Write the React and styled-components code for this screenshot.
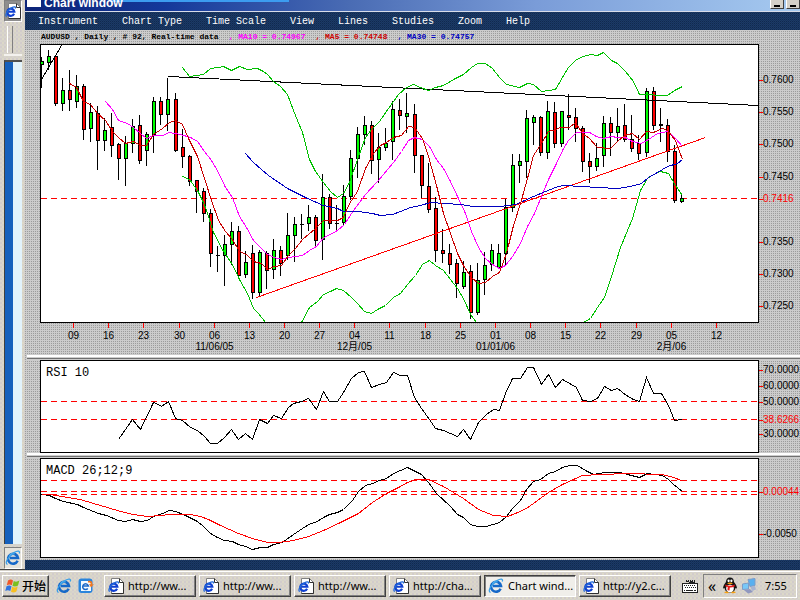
import React from "react"
import styled, { createGlobalStyle, css } from "styled-components"

const red = "#ff0000"
const mono = `"Liberation Mono", "Noto Sans CJK SC", monospace`
const face = `conic-gradient(#cccccc 25%, #cccccc 0 50%, #9c9c9c 0 75%, #cccccc 0) 0 0 / 2px 2px`
const navy = `conic-gradient(#1c3c64 25%, #102850 0 50%, #1c3c64 0 75%, #16305e 0) 0 0 / 2px 2px`
const system = `conic-gradient(#d6d2ca 25%, #dcd8c8 0 50%, #d2cccc 0 75%, #d8d4cc 0) 0 0 / 4px 4px`

const GlobalStyle = createGlobalStyle`
  * { box-sizing: border-box; }
  body { margin: 0; background: #d4d0c8; }
  button { border: 0; margin: 0; padding: 0; background: none; color: inherit; font: inherit; }
`

const Desktop = styled.div`
  display: flex;
  flex-direction: column;
  min-height: 100vh;
  overflow: hidden;
  font-family: "Noto Sans", "Noto Sans CJK SC", sans-serif;
  font-size: 11px;
`

const Workspace = styled.div`
  display: flex;
  flex: 1;
`

/* ---- side strip ---- */

const Strip = styled.aside`
  display: flex;
  flex-direction: column;
  width: 25px;
  padding: 0 3px 0 4px;
  background: ${system};
  border-bottom: 1px solid #404040;
`

const StripIcon = styled.div`
  display: flex;
  justify-content: center;
  align-items: center;
  height: 22px;
  background: ${p => (p.$dark ? "#8e8e8e" : "#e6e3dc")};
  border: 1px solid #808080;
  border-right-color: #fff;
  border-bottom-color: #fff;
`

const Grip = styled.div`
  height: 34px;
  padding: 4px 3px 3px;
  border-bottom: 2px solid #f4f2ee;
  margin-bottom: 4px;

  &::before {
    content: "";
    display: block;
    width: 4px;
    height: 27px;
    border-left: 1px solid #fff;
    border-right: 1px solid #808080;
  }
`

const Gutter = styled.div`
  flex: 1;
  border-top: 2px solid #505050;
  border-left: 1px solid #404040;
  background: linear-gradient(90deg, #1660bc 8px, #e2f3fc 8px);
  margin-bottom: 3px;
`

/* ---- chart window ---- */

const Window = styled.main`
  display: flex;
  flex-direction: column;
  flex: 1;
  min-width: 0;
  background: ${face};
`

const TitleBar = styled.header`
  display: flex;
  align-items: flex-end;
  height: 12px;
  padding-left: 2px;
  overflow: hidden;
  color: #fff;
  border-bottom: 1px solid #d8dce8;
  background:
    linear-gradient(#3c9cf0, #3c9cf0) 85px 0 / 179px 2px no-repeat,
    linear-gradient(90deg, #0c2478 0%, #14389a 18%, #4a6cb4 42%, #7a9cd8 66%, #a6caf0 100%);
`

const TitleIcon = styled.span`
  width: 14px;
  height: 7px;
  margin-bottom: 4px;
  background: #fff;
`

const Title = styled.h1`
  flex: 1;
  margin: 0 0 1px 3px;
  font: bold 12px/14px "Liberation Sans", sans-serif;
`

const WindowButton = styled.button`
  width: 14px;
  height: 9px;
  margin: 0 0 2px 2px;
  background: #d4d0c8;
  border: 1px solid #404040;
  border-top: 0;
  border-left-color: #fff;
  flex: none;

  &::before {
    content: "";
    display: block;
    width: 6px;
    height: 2px;
    margin: 3px 0 0 3px;
    background: #000;
  }
`

const MenuBar = styled.nav`
  display: flex;
  align-items: center;
  gap: 24px;
  height: 18px;
  padding-left: 13px;
  color: #fff;
  background: ${navy};
  font-family: ${mono};
  font-size: 10px;
  white-space: nowrap;
`

const Legend = styled.p`
  display: flex;
  align-items: center;
  gap: 10px;
  height: 14px;
  margin: 0;
  padding-left: 16px;
  font: bold 8px/14px ${mono};
  white-space: pre;
`

const LegendItem = styled.span`
  color: ${p => p.$color};
`

const Panel = styled.section`
  display: grid;
  grid-template-columns: minmax(0, 1fr) 41px;
  padding-left: 15px;
`

const Plot = styled.div`
  position: relative;
  border: 1px solid #000;
  background: #fff;

  svg {
    display: block;
    width: 100%;
    height: ${p => p.$height}px;
  }
`

const PlotLabel = styled.h2`
  position: absolute;
  top: 4px;
  left: 5px;
  margin: 0;
  font: 12px/16px ${mono};
`

const Axis = styled.svg`
  display: block;
  width: 100%;
  height: ${p => p.$height}px;
  font-family: "Liberation Sans", "Noto Sans CJK SC", sans-serif;
  font-size: 10px;
  overflow: hidden;
`

const Splitter = styled.hr`
  height: 5px;
  margin: 0 0 0 2px;
  border: 0;
  background: linear-gradient(#fff 2px, #ccc 2px 3px, #707070 3px 4px, #ccc 4px);
`

const Footer = styled.div`
  flex: 1;
  min-height: 10px;
  margin-top: 2px;
  background: ${navy};
`

/* ---- task bar ---- */

const TaskBar = styled.footer`
  display: flex;
  align-items: center;
  height: 30px;
  padding: 0 3px 0 2px;
  border-top: 1px solid #d4d0c8;
  box-shadow: inset 0 1px #fff;
  background: ${system};
`

const raised = css`
  border: 1px solid #fff;
  border-right-color: #404040;
  border-bottom-color: #404040;
  box-shadow: inset -1px -1px #808080;
`

const sunken = css`
  border: 1px solid #404040;
  border-right-color: #fff;
  border-bottom-color: #fff;
  box-shadow: inset 1px 1px #808080;
`

const StartButton = styled.button`
  ${raised}
  display: flex;
  align-items: center;
  gap: 1px;
  width: 47px;
  height: 22px;
  padding-left: 2px;
  font: 500 12px/20px "Noto Sans CJK SC", sans-serif;
  white-space: nowrap;
  flex: none;
`

const QuickLaunch = styled.div`
  display: flex;
  gap: 6px;
  width: 55px;
  padding-left: 7px;
  flex: none;
`

const Tasks = styled.div`
  display: flex;
  flex: 1;
  gap: 3px;
  min-width: 0;
`

const Task = styled.button`
  ${p => (p.$active ? sunken : raised)}
  display: flex;
  align-items: center;
  gap: 4px;
  flex: 0 0 92px;
  height: 22px;
  padding-left: 3px;
  background: ${p => (p.$active ? "#f0eeea" : "transparent")};
  white-space: nowrap;
`

const Tray = styled.div`
  display: flex;
  align-items: center;
  gap: 3px;
  height: 24px;
  width: 94px;
  margin-left: 4px;
  padding-left: 4px;
  border: 1px solid #808080;
  border-right-color: #fff;
  border-bottom-color: #fff;
  flex: none;
`

const Expand = styled.button`
  width: 11px;
  font-size: 16px;
  line-height: 16px;
  text-align: left;
`

const Clock = styled.time`
  margin-left: 5px;
`

/* ---- icons ---- */

const IeIcon = () => (
  <svg width="16" height="16" viewBox="0 0 16 16" fill="none" aria-hidden="true">
    <path d="M12.6 10.8A5 5 0 1 1 13 8H5" stroke="#1668c8" strokeWidth="2.6" />
    <path d="M4.5 6.4a4 4 0 0 1 5-2.4" stroke="#6cc8f8" strokeWidth="1.2" />
    <path d="M2.6 14.4C-1 13.6 3.2 6 9 2.6c4-2.4 6.4-1.6 5.2 1" stroke="#3aa0e8" strokeWidth="1.3" />
  </svg>
)

const PageIcon = () => (
  <svg width="16" height="16" viewBox="0 0 16 16" aria-hidden="true">
    <path d="M3.5.5h8l4 4v11h-12z" fill="#fff" stroke="#808080" />
    <path d="M11.5.5v4h4M15.5 4.5v11h-12" fill="none" stroke="#303030" />
    <g transform="translate(0 3) scale(.72)">
      <path d="M12.6 10.8A5 5 0 1 1 13 8H5" fill="none" stroke="#1040d0" strokeWidth="3" />
      <path d="M2.6 14.4C-1 13.6 3.2 6 9 2.6c4-2.4 6.4-1.6 5.2 1" fill="none" stroke="#2068d8" strokeWidth="1.8" />
    </g>
  </svg>
)

const FlagIcon = () => (
  <svg width="16" height="16" viewBox="0 0 16 16" aria-hidden="true">
    <path d="M3 2.4c2-1.2 3.6-1 5 0L6.8 7.2c-1.4-1-3-1.1-5 0z" fill="#f0582a" />
    <path d="M8.8 3c1.8 1 3.6.9 5.6-.4L13 7.6c-2 1.1-3.7 1.2-5.5.2z" fill="#7ac020" />
    <path d="M1.5 8.2c2-1.1 3.6-1 5 0L5.3 13c-1.5-1-3-1.1-5 0z" fill="#2f74e0" />
    <path d="M7.2 8.7c1.8 1 3.6.9 5.5-.2l-1.3 5c-2 1.2-3.7 1.2-5.4.2z" fill="#f8c020" />
  </svg>
)

const MailIcon = () => (
  <svg width="17" height="16" viewBox="0 0 17 16" aria-hidden="true">
    <rect x=".5" y=".5" width="14" height="14.5" rx="3" fill="#2a84dc" />
    <path d="M3 3h8l2 2v8H3z" fill="#f4faff" />
    <path d="M9.8 10.6A2.9 2.9 0 1 1 10.4 8H5.5" fill="none" stroke="#1c68c8" strokeWidth="1.5" />
    <path d="M10 3c3-1 5 .8 4.2 3.5l1.8-.5-3 3.500-2-3.400 1.600.2c.3-1.300-.6-2-2.600-1.800z" fill="#f07820" />
  </svg>
)

const KeyboardIcon = () => (
  <svg width="17" height="14" viewBox="0 0 17 14" shapeRendering="crispEdges" aria-hidden="true">
    <path d="M4.500 1v1.500h2V1M8.500 1v1.500h2V1M12.500 1v2.500h-5V5" fill="none" stroke="#202020" />
    <rect x=".5" y="4.500" width="15" height="9" fill="#fff" stroke="#202020" />
    <path d="M2 6.500h12M3 8.500h11" stroke="#202020" strokeDasharray="1 1" />
    <path d="M2 11.500h1M4 11.500h7M12 11.500h2" stroke="#202020" />
  </svg>
)

const PenguinIcon = () => (
  <svg width="16" height="17" viewBox="0 0 16 17" aria-hidden="true">
    <path d="M8 .5c2.6 0 4 1.800 4 4.500 1.500 1.800 3 4.200 3 6.500l-1.500-.6C13 14 11 15.500 8 15.500S3 14 2.500 10.900L1 11.500C1 9.200 2.500 6.800 4 5c0-2.700 1.400-4.500 4-4.500z" fill="#141414" />
    <ellipse cx="8" cy="11.500" rx="3.800" ry="3.700" fill="#fff" />
    <ellipse cx="6.600" cy="3.800" rx="1.100" ry="1.400" fill="#fff" />
    <ellipse cx="9.400" cy="3.800" rx="1.100" ry="1.400" fill="#fff" />
    <path d="M5 6.200q3-1.200 6 0Q8 8.400 5 6.200z" fill="#f8a010" />
    <path d="M3.500 7.500Q8 10 12.500 7.500l.3 1.800q-2.300 1.400-5 1.300l-.3 2.900-2-.2.2-3.200-2.400-.9z" fill="#e81818" />
    <path d="M2 15.300q2.500-1.800 5 .2-2.500 1.800-5-.2zM9 15.500q2.500-2 5-.2-2.500 2-5 .2z" fill="#f8a010" />
  </svg>
)

const NetworkIcon = () => (
  <svg width="16" height="16" viewBox="0 0 16 16" aria-hidden="true">
    <path d="M7 1.500l7-1v7l-5 1z" fill="#58b0f0" stroke="#7c9cc8" />
    <path d="M9.500 9l4.500-1 1 3.500-4 1.500z" fill="#a8b4d0" />
    <path d="M1.500 6l6-1v6l-6 .5z" fill="#78c8f8" stroke="#7c9cc8" />
    <path d="M3 12l6-1 3 3-5 1.500z" fill="#9098c0" />
  </svg>
)

/* ---- chart data, in plot units ---- */

// high, body top, body bottom, low, direction (1 up, -1 down, 0 flat)
const candles = [
  [57, 61, 64, 87, 1], [50, 56, 62, 69, 1], [56, 56, 103, 105, -1], [78, 90, 103, 110, 1],
  [70, 90, 99, 110, -1], [75, 86, 101, 107, 1], [84, 86, 129, 139, -1], [103, 112, 128, 141, 1],
  [106, 113, 140, 169, -1], [118, 130, 140, 150, 1], [113, 127, 145, 156, -1], [143, 144, 158, 179, -1],
  [136, 143, 158, 185, 1], [119, 126, 143, 152, 1], [115, 125, 160, 163, -1], [132, 134, 150, 165, 1],
  [97, 101, 134, 152, 1], [97, 101, 114, 124, -1], [78, 99, 114, 130, 1], [93, 99, 150, 151, -1],
  [129, 147, 156, 167, -1], [155, 156, 181, 185, -1], [180, 180, 191, 212, -1], [188, 191, 213, 221, -1],
  [209, 213, 253, 266, -1], [246, 255, 255, 271, 0], [235, 244, 255, 285, 1], [222, 231, 244, 264, 1],
  [226, 231, 275, 278, -1], [251, 262, 274, 277, 1], [245, 253, 292, 298, -1], [250, 252, 292, 295, 1],
  [251, 253, 270, 288, -1], [239, 250, 269, 278, 1], [246, 250, 263, 275, -1], [213, 235, 255, 259, 1],
  [217, 224, 235, 261, 1], [214, 224, 224, 238, 0], [205, 217, 223, 230, 1], [215, 217, 240, 245, -1],
  [174, 197, 239, 259, 1], [194, 197, 223, 228, -1], [205, 223, 223, 229, 0], [185, 196, 222, 224, 1],
  [150, 158, 196, 199, 1], [127, 134, 158, 177, 1], [116, 125, 134, 144, 1], [121, 125, 160, 173, -1],
  [133, 147, 159, 182, 1], [128, 143, 147, 150, 1], [101, 109, 141, 159, 1], [99, 110, 115, 129, -1],
  [93, 113, 116, 132, 1], [104, 114, 155, 172, -1], [155, 155, 185, 197, -1], [163, 186, 209, 212, -1],
  [197, 208, 250, 261, -1], [229, 250, 253, 262, -1], [244, 253, 264, 273, -1], [259, 263, 283, 297, -1],
  [261, 272, 286, 288, 1], [265, 271, 312, 318, -1], [263, 280, 312, 314, 1], [252, 265, 279, 294, 1],
  [244, 250, 264, 270, 1], [244, 253, 267, 268, 1], [199, 207, 253, 264, 1], [154, 165, 207, 211, 1],
  [154, 161, 165, 182, 1], [110, 118, 161, 177, 1], [115, 117, 122, 144, 1], [116, 117, 152, 155, -1],
  [101, 111, 152, 158, 1], [102, 112, 143, 147, -1], [111, 111, 143, 146, 1], [94, 115, 117, 129, -1],
  [108, 117, 128, 141, -1], [126, 128, 161, 171, -1], [153, 161, 166, 182, -1], [143, 158, 166, 170, 1],
  [116, 123, 155, 166, 1], [117, 123, 132, 155, -1], [108, 126, 132, 141, 1], [104, 125, 139, 141, -1],
  [115, 139, 148, 151, -1], [135, 143, 153, 159, -1], [88, 91, 152, 156, 1], [87, 91, 125, 129, -1],
  [108, 124, 125, 141, 0], [119, 125, 151, 161, -1], [145, 151, 200, 202, -1], [193, 198, 201, 202, 1],
]

const bandTop = "182,67 189,76 203,74 210,68 218,67 223,66 231,70 239,66 247,69 257,68 263,71 267,74 273,81 280,86 287,94 293,110 297,120 302,132 309,159 315,171 323,182 330,191 337,197 343,193 349,182 357,159 365,137 371,129 379,121 388,108 398,94 406,87 413,84 420,87 428,90 435,87 443,85 455,78 463,74 471,67 477,63 485,63 492,68 499,77 506,84 519,87 527,83 533,84 541,91 548,90 555,89 562,77 568,67 576,59 583,56 590,54 597,55 603,52 611,60 617,63 625,71 633,81 639,94 667,95 674,90 682,86"
const bandLow1 = "182,176 189,179 197,190 203,202 206,210 213,232 223,251 232,264 239,279 247,293 253,308 258,313 265,322"
const bandLow2 = "301,322 309,307 317,301 323,294 330,291 336,288 343,290 351,297 357,303 364,311 371,313 377,309 385,305 393,297 400,293 407,284 415,275 422,264 429,260 435,265 443,270 457,288 463,298 470,314 476,322"
const bandLow3 = "583,322 590,318 597,307 604,297 611,276 620,247 632,218 640,190 647,178 653,174 660,171 668,173 675,185 682,195"
const ma5 = "69,83 76,87 83,101 90,104 97,113 105,120 112,131 118,137 125,143 133,141 140,145 146,145 153,134 162,128 169,122 175,120 182,124 188,138 197,156 204,178 211,200 218,220 225,231 232,239 239,251 246,254 253,261 261,263 267,269 274,266 281,265 288,255 295,248 302,239 315,228 323,220 337,220 343,217 349,203 357,191 365,168 373,153 380,145 386,142 393,137 401,135 408,126 414,127 422,138 428,156 436,185 443,213 449,230 457,253 464,267 471,277 478,283 485,282 492,276 499,272 506,253 513,225 520,203 527,178 533,155 541,143 548,131 555,129 560,127 569,127 575,122 582,133 589,138 597,147 610,148 617,141 624,135 632,133 639,139 646,131 653,132 662,128 667,130 675,140 682,159"
const ma10 = "105,101 112,109 118,120 127,123 133,127 140,133 146,138 153,135 162,135 169,132 180,134 190,137 197,141 204,151 211,160 218,172 225,187 232,197 239,216 246,227 253,240 260,247 267,254 274,257 281,259 288,257 302,255 309,250 316,246 323,237 330,234 337,230 344,224 353,210 365,194 377,181 393,162 401,151 408,140 414,137 422,139 429,146 436,159 443,168 450,181 457,196 465,213 471,231 478,247 485,258 492,264 499,268 505,265 512,256 520,243 527,226 534,213 541,196 548,179 556,163 563,148 568,140 576,132 589,132 596,136 603,138 611,136 617,137 625,137 632,141 641,143 648,139 657,133 667,131 675,138 682,146"
const ma30 = "245,153 253,162 268,175 287,188 307,198 323,205 337,208 343,211 358,211 372,213 380,215 392,214 400,211 410,207 420,205 430,202 460,204 473,206 500,206 515,204 522,201 533,196 545,191 555,187 562,185 582,186 597,187 617,188 630,186 641,183 648,177 657,172 667,166 677,163 682,159"

const rsi = "118,439 132,419 140,429 153,402 156,403 161,406 168,401 175,418 182,420 190,427 197,430 204,436 210,443 217,443 224,437 231,429 238,439 245,433 252,439 259,419 267,423 273,415 281,418 288,407 293,403 301,401 308,398 316,409 323,391 329,401 337,401 343,392 351,378 358,372 364,371 371,387 379,384 386,382 393,372 400,375 407,375 414,397 421,408 429,419 435,428 443,430 457,436 463,429 470,439 478,422 486,414 493,409 499,410 505,393 512,378 520,378 527,367 533,367 541,384 548,374 555,387 562,379 569,383 576,387 582,400 590,401 597,398 604,386 611,390 617,388 626,395 633,399 639,401 646,377 653,393 661,393 668,405 674,420 682,419"

const macd = "41,494 49,495 55,498 63,501 77,504 83,507 98,513 106,515 118,520 125,521 132,519 140,521 147,520 153,516 162,513 169,510 175,511 183,514 197,521 203,526 210,533 217,537 224,540 232,541 238,544 245,546 252,549 260,547 267,547 273,544 282,542 293,534 302,528 310,523 315,522 323,517 329,514 337,512 343,509 352,500 358,491 365,485 372,483 379,480 386,478 393,473 400,470 407,467 415,471 421,474 428,482 436,493 450,506 457,514 463,517 470,524 477,526 486,526 499,522 506,516 512,508 520,500 526,489 533,481 540,479 548,473 555,471 562,467 569,465 577,465 585,470 593,474 604,472 620,472 627,474 639,477 647,473 662,475 668,479 673,484 682,491"
const signal = "41,494 49,494 55,495 67,497 80,499 93,503 107,507 120,511 133,514 147,516 160,515 169,514 190,514 200,516 208,519 220,525 238,533 252,538 267,542 278,542 293,540 308,536 323,530 340,522 358,513 372,502 386,493 400,486 407,482 415,479 428,479 443,486 463,498 478,509 493,515 507,516 515,513 526,508 548,492 562,484 575,478 582,475 600,474 627,473 662,474 673,477 681,480"

const days = [
  [73, "09"], [108, "16"], [143, "23"], [179, "30"], [214, "06", "11/06/05"], [249, "13"], [284, "20"],
  [319, "27"], [354, "04", "12月/05"], [389, "11"], [425, "18"], [460, "25"], [495, "01", "01/01/06"],
  [530, "08"], [565, "15"], [600, "22"], [636, "29"], [671, "05", "2月/06"], [716, "12"],
]

const priceTicks = [
  [36, "0.7600"], [68, "0.7550"], [100, "0.7500"], [133, "0.7450"], [155, "0.7416", red],
  [198, "0.7350"], [230, "0.7300"], [262, "0.7250"],
]
const rsiTicks = [[10, "70.0000"], [26, "60.0000"], [42, "50.0000"], [60, "38.6266", red], [74, "30.0000"]]
const macdTicks = [[34, "0.00044", red], [76, "-0.0050"]]

const Candle = ({ index, data: [high, top, bottom, low, dir] }) => {
  const x = Math.floor(41.43 + index * 7.03)
  return (
    <g>
      <rect x={x} y={high} width="1" height={low - high + 1} />
      <rect x={x - 1} y={top} width="4" height={bottom - top + 1} />
      {dir !== 0 && (
        <rect x={x} y={top + 1} width="2" height={bottom - top - 1} fill={dir > 0 ? "#00ff00" : "#ff0000"} />
      )}
    </g>
  )
}

const Line = styled.polyline.attrs({ fill: "none", transform: "translate(.5 .5)" })`
  stroke: ${p => p.$color || "#000"};
`

const Level = styled.line.attrs({ x1: 41, x2: 758, transform: "translate(0 .5)" })`
  stroke: ${red};
  stroke-dasharray: 6 4;
`

const Canvas = ({ viewBox, title, children }) => (
  <svg viewBox={viewBox} preserveAspectRatio="none" shapeRendering="crispEdges" role="img" aria-label={title}>
    {children}
  </svg>
)

const ValueAxis = ({ ticks, height }) => (
  <Axis $height={height}>
    {ticks.map(([y, text, color]) => (
      <g key={text}>
        <path d={`M0 ${y + 0.5}h4`} stroke={red} />
        <text x="4" y={y + 3} fill={color}>{text}</text>
      </g>
    ))}
  </Axis>
)

const DateAxis = () => (
  <Axis $height={32}>
    {days.map(([at, day, month]) => {
      const x = `${((at - 39.5) / 719) * 100}%`
      return (
        <g key={at} textAnchor="middle">
          <line x1={x} x2={x} y1="0" y2="5" stroke={red} shapeRendering="crispEdges" />
          <text x={x} y="16">{day}</text>
          {month && <text x={x} y="27">{month}</text>}
        </g>
      )
    })}
  </Axis>
)

const menus = ["Instrument", "Chart Type", "Time Scale", "View", "Lines", "Studies", "Zoom", "Help"]

const tasks = [
  { title: "http://ww..." },
  { title: "http://ww..." },
  { title: "http://ww..." },
  { title: "http://cha..." },
  { title: "Chart wind...", active: true },
  { title: "http://y2.c..." },
]

const App = () => (
  <Desktop>
    <GlobalStyle />
    <Workspace>
      <Strip>
        <StripIcon $dark><PageIcon /></StripIcon>
        <Grip />
        <Gutter />
        <StripIcon><IeIcon /></StripIcon>
      </Strip>
      <Window>
        <TitleBar>
          <TitleIcon />
          <Title>Chart window</Title>
          <WindowButton aria-label="Minimize" />
          <WindowButton aria-label="Maximize" />
        </TitleBar>
        <MenuBar>
          {menus.map(name => <button key={name}>{name}</button>)}
        </MenuBar>
        <Legend>
          <LegendItem $color="#000">AUDUSD , Daily , # 92, Real-time data</LegendItem>
          <LegendItem $color="#ff00ff">, MA10 = 0.74967</LegendItem>
          <LegendItem $color="#cc0000">, MA5 = 0.74748</LegendItem>
          <LegendItem $color="#0000c0">, MA30 = 0.74757</LegendItem>
        </Legend>
        <Panel>
          <Plot $height={277}>
            <Canvas viewBox="41 45 717 277" title="AUDUSD daily">
              <Level y1="198" y2="198" />
              {candles.map((data, i) => <Candle key={i} index={i} data={data} />)}
              <Line points="41,79 61,45" />
              <Line points="168,76 758,105" />
              <Line $color={red} points="256,297 705,137" />
              <Line $color="#00c000" points={bandTop} />
              <Line $color="#00c000" points={bandLow1} />
              <Line $color="#00c000" points={bandLow2} />
              <Line $color="#00c000" points={bandLow3} />
              <Line $color="#ff00ff" points={ma10} />
              <Line $color="#0000c0" points={ma30} />
              <Line $color="#c80000" points={ma5} />
            </Canvas>
          </Plot>
          <ValueAxis ticks={priceTicks} height={279} />
          <DateAxis />
        </Panel>
        <Splitter />
        <Panel>
          <Plot $height={90}>
            <PlotLabel>RSI 10</PlotLabel>
            <Canvas viewBox="41 361 717 90" title="RSI">
              <Level y1="401" y2="401" />
              <Level y1="419" y2="419" />
              <Line points={rsi} />
            </Canvas>
          </Plot>
          <ValueAxis ticks={rsiTicks} height={93} />
        </Panel>
        <Splitter />
        <Panel>
          <Plot $height={98}>
            <PlotLabel>MACD 26;12;9</PlotLabel>
            <Canvas viewBox="41 459 717 98" title="MACD">
              <Level y1="480" y2="480" />
              <Level y1="491" y2="491" />
              <Level y1="494" y2="494" />
              <Line points={macd} />
              <Line $color={red} points={signal} />
            </Canvas>
          </Plot>
          <ValueAxis ticks={macdTicks} height={100} />
        </Panel>
        <Footer />
      </Window>
    </Workspace>
    <TaskBar>
      <StartButton><FlagIcon />开始</StartButton>
      <QuickLaunch>
        <IeIcon />
        <MailIcon />
      </QuickLaunch>
      <Tasks>
        {tasks.map(({ title, active }, i) => (
          <Task key={i} $active={active}>
            {active ? <IeIcon /> : <PageIcon />}
            {title}
          </Task>
        ))}
      </Tasks>
      <KeyboardIcon />
      <Tray>
        <Expand aria-label="Show hidden icons">«</Expand>
        <PenguinIcon />
        <NetworkIcon />
        <Clock>7:55</Clock>
      </Tray>
    </TaskBar>
  </Desktop>
)

export default App
